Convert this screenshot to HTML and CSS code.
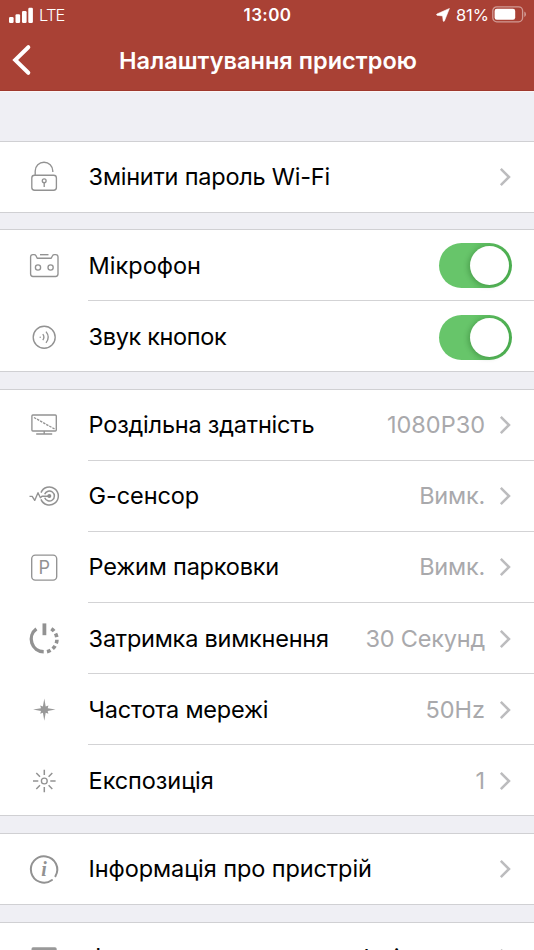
FILE: index.html
```html
<!DOCTYPE html>
<html lang="uk">
<head>
<meta charset="utf-8">
<title>Налаштування пристрою</title>
<link rel="stylesheet" href="styles.css">
</head>
<body>
<svg width="0" height="0" class="defs"><symbol id="chev" viewBox="0 0 12 20"><path d="M1.8 1.8 10 10 1.8 18.2" fill="none" stroke="#bcbcbe" stroke-width="2.5"/></symbol></svg>
<header class="top">
  <div class="status">
    <div class="carrier">
      <svg width="24" height="16" viewBox="0 0 24 16" fill="#fff"><rect x="0" y="10" width="4.6" height="6" rx="1.2"/><rect x="6.5" y="7.3" width="4.6" height="8.7" rx="1.2"/><rect x="13" y="4" width="4.6" height="12" rx="1.2"/><rect x="19.3" y="0.7" width="4.6" height="15.3" rx="1.2"/></svg>
      <span class="lte">LTE</span>
    </div>
    <div class="clock">13:00</div>
    <div class="power">
      <svg width="14" height="14" viewBox="0 0 14 14"><path d="M13.4.5 8.4 13Q7.7 14 7.2 13L6.6 7.9 1 7.3Q0 6.8.9 6Z" fill="#fff" stroke="#fff" stroke-width=".6"/></svg>
      <span class="percent">81%</span>
      <svg width="35" height="17" viewBox="0 0 35 17"><rect x=".8" y=".8" width="29.8" height="15" rx="4" fill="none" stroke="#d19a94" stroke-width="1.3"/><rect x="2.6" y="2.8" width="20.6" height="11" rx="2.2" fill="#fff"/><path d="M32.3 5.6Q34 6.3 34 8.3T32.3 11Z" fill="#d19a94"/></svg>
    </div>
  </div>
  <div class="nav">
    <svg class="back" width="20" height="32" viewBox="0 0 20 32"><path d="M16.3 3.2 3.2 16 16.3 28.8" fill="none" stroke="#fff" stroke-width="4" stroke-linecap="round"/></svg>
    <h1>Налаштування пристрою</h1>
  </div>
</header>
<main>
  <section class="group first">
    <div class="row">
      <svg class="icon" viewBox="0 0 40 40"><rect x="7.8" y="18.2" width="24.6" height="15" rx="2.8"/><path d="M11.2 18V14A8.8 8.8 0 0 1 28.8 14V15"/><circle cx="20.2" cy="23.8" r="1.9"/><path d="M20.2 25.7V29.9"/></svg>
      <span class="label l-wifi">Змінити пароль Wi-Fi</span>
      <svg class="chevron"><use href="#chev"/></svg>
    </div>
  </section>
  <section class="group second">
    <div class="row">
      <svg class="icon" viewBox="0 0 40 40"><path d="M13.2 12.2 12 9.7Q11.5 8.6 10 8.6H8.8Q6.6 8.6 6.6 10.8V28.1Q6.6 30.5 9 30.5H31.6Q34 30.5 34 28.1V10.8Q34 8.6 31.8 8.6H30.5Q29 8.6 28.5 9.7L27.2 12.2Z" stroke-linejoin="round"/><path d="M16 8.7H24.5"/><circle cx="14" cy="21.5" r="2.6"/><circle cx="26.6" cy="21.5" r="2.6"/></svg>
      <span class="label">Мікрофон</span>
      <span class="switch"><span class="knob"></span></span>
    </div>
    <div class="row">
      <svg class="icon" viewBox="0 0 40 40"><circle cx="20.2" cy="20.2" r="11"/><circle cx="16.2" cy="20.2" r=".7" fill="#8e8e8e" stroke="none"/><path d="M18.8 17.2Q21 20.2 18.8 23.2M22 14.6Q26.5 20.2 22 25.8"/></svg>
      <span class="label l-sound">Звук кнопок</span>
      <span class="switch"><span class="knob"></span></span>
    </div>
  </section>
  <section class="group">
    <div class="row raised">
      <svg class="icon" viewBox="0 0 40 40"><rect x="7.9" y="10" width="24.4" height="16" rx="1"/><path d="M20.2 26V28.8M12.2 29H28.2"/><path d="M10 12.5 30.6 24" stroke-dasharray="2.5 1"/></svg>
      <span class="label l-res">Роздільна здатність</span>
      <span class="value v-res">1080P30</span>
      <svg class="chevron"><use href="#chev"/></svg>
    </div>
    <div class="row raised">
      <svg class="icon" viewBox="0 0 40 40"><path d="M5.5 20.3H8.2L10.7 24.4 14 16.7 16.4 21.7 18 20.2H25" stroke-linejoin="round"/><circle cx="25.3" cy="20" r="2" fill="#8e8e8e" stroke="none"/><path d="M20.7 18.2A5 5 0 1 1 20.7 21.8M17 16.6A9 9 0 1 1 17 23.4" stroke-width="1.5"/></svg>
      <span class="label l-g">G-сенсор</span>
      <span class="value v-off">Вимк.</span>
      <svg class="chevron"><use href="#chev"/></svg>
    </div>
    <div class="row raised">
      <svg class="icon" viewBox="0 0 40 40"><rect x="7.7" y="8.1" width="25" height="25" rx="3.6"/><text x="14.6" y="27.2" class="p-mark">P</text></svg>
      <span class="label l-park">Режим парковки</span>
      <span class="value v-off">Вимк.</span>
      <svg class="chevron"><use href="#chev"/></svg>
    </div>
    <div class="row">
      <svg class="icon" viewBox="0 0 40 40"><path d="M20.4 4.4V16.2" stroke-width="3.8"/><path d="M12.4 9.9A12.7 12.7 0 0 0 19.7 32.8" stroke-width="3.4"/><path d="M27.3 9.7A12.7 12.7 0 0 1 21.4 32.9" stroke-width="3.6" stroke-dasharray="3.8 2.6"/></svg>
      <span class="label l-delay">Затримка вимкнення</span>
      <span class="value v-sec">30 Секунд</span>
      <svg class="chevron"><use href="#chev"/></svg>
    </div>
    <div class="row">
      <svg class="icon" viewBox="0 0 40 40"><path d="M20.3 8.5 21.7 16.4 24.4 15.4 23.7 18.3 31.5 19.6 23.7 20.9 24.4 23.8 21.7 22.8 20.3 30.7 18.9 22.8 16.2 23.8 17 20.9 9.1 19.6 17 18.3 16.2 15.4 18.9 16.4Z" fill="#999" stroke="none"/></svg>
      <span class="label l-freq">Частота мережі</span>
      <span class="value v-hz">50Hz</span>
      <svg class="chevron"><use href="#chev"/></svg>
    </div>
    <div class="row">
      <svg class="icon" viewBox="0 0 40 40"><circle cx="20.3" cy="20" r="2.9"/><path d="M20.3 8.7V14M20.3 26V31.3M9 20H14.3M26.3 20H31.6M12.3 12 16 15.7M28.3 12 24.6 15.7M12.3 28 16 24.3M28.3 28 24.6 24.3" stroke-width="1.5"/></svg>
      <span class="label l-exp">Експозиція</span>
      <span class="value v-one">1</span>
      <svg class="chevron"><use href="#chev"/></svg>
    </div>
  </section>
  <section class="group">
    <div class="row">
      <svg class="icon" viewBox="0 0 40 40"><path d="M31.4 27.2A13.2 13.2 0 1 0 28 31" stroke-width="2" stroke-linecap="round"/><text x="17.2" y="26.8" class="i-mark">i</text></svg>
      <span class="label l-info">Інформація про пристрій</span>
      <svg class="chevron"><use href="#chev"/></svg>
    </div>
  </section>
  <section class="group">
    <div class="row">
      <svg class="icon" viewBox="0 0 40 40"><path d="M9 9.2H31Q32.7 9.2 32.7 11V31H7.5V11Q7.5 9.2 9 9.2Z" fill="#999" stroke="none"/></svg>
      <span class="label l-format">Форматувати карту пам'яті</span>
      <svg class="chevron"><use href="#chev"/></svg>
    </div>
  </section>
</main>
</body>
</html>
```
FILE: styles.css
```css
* { box-sizing: border-box; }
html, body { height: 100%; overflow: hidden; }
body { margin: 0; background: #efeff4; color: #000; font-family: Inter, "Noto Sans", sans-serif; }
.defs { display: none; }
.top { height: 92px; background: #a94135; border-bottom: 1px solid #fbf6f6; box-shadow: inset 0 -1px #9f382d; color: #fff; }
.status { height: 30px; display: grid; grid-template-columns: 1fr auto 1fr; align-items: center; padding: 0 8px 0 9px; }
.carrier { display: flex; align-items: center; gap: 6px; height: 30px; }
.carrier svg { margin-top: -1px; }
.lte { font-size: 16.5px; font-weight: 300; letter-spacing: -0.8px; }
.clock { font-size: 17px; font-weight: 600; letter-spacing: 0.4px; }
.power { display: flex; justify-content: flex-end; align-items: center; margin-right: -1px; }
.percent { font-size: 16.5px; letter-spacing: 0; margin: 0 3px 0 6px; }
.power svg:last-child { margin-top: -2px; }
.nav { height: 61px; display: grid; grid-template-columns: 40px 1fr 40px; align-items: center; }
.back { margin-left: 12px; margin-top: -2px; }
h1 { margin: 0 -2px 0 0; text-align: center; font-size: 23.5px; line-height: 30px; font-weight: 600; letter-spacing: 0.03px; white-space: nowrap; }
.group { background: #fff; border-top: 1px solid #d0d0d3; border-bottom: 1px solid #d0d0d3; margin-bottom: 17px; }
.first { margin-top: 49px; margin-bottom: 16px; }
.row { height: 71px; display: flex; align-items: center; padding: 0 22px 0 24px; background: linear-gradient(#d3d3d5, #d3d3d5) 88px 100% / 100% 1px no-repeat; }
.row:last-child { height: 70px; background: none; }
.row:last-child:not(:first-child) { padding-top: 2px; }
.raised { padding-bottom: 2px; }
.icon { width: 40px; height: 40px; flex: none; fill: none; stroke: #929292; stroke-width: 1.35; margin-right: 24.6px; }
.label { font-size: 23.5px; line-height: 32px; white-space: nowrap; margin-right: auto; }
.l-wifi { letter-spacing: -0.23px; }
.l-sound { letter-spacing: -0.35px; }
.l-res, .l-park, .l-freq { letter-spacing: -0.21px; }
.l-delay { letter-spacing: -0.23px; }
.l-g, .l-exp, .l-info { letter-spacing: -0.09px; }
.l-format { letter-spacing: -0.2px; }
.value { font-size: 23.5px; line-height: 32px; white-space: nowrap; color: #a9a9ac; font-weight: 400; }
.v-sec, .v-off { letter-spacing: -0.2px; }
.chevron { width: 12px; height: 20px; flex: none; margin-left: 14px; margin-right: 1px; }
.switch { width: 73px; height: 45px; border-radius: 23px; background: linear-gradient(90deg, #67c56a 45%, #4caf50); padding: 3px; display: flex; justify-content: flex-end; }
.knob { width: 39px; height: 39px; border-radius: 50%; background: #fff; box-shadow: -2px 1px 5px rgba(0, 60, 0, .25); }
.p-mark { font: 400 18px Inter, sans-serif; fill: #929292; stroke: none; }
.i-mark { font: italic 700 20px "Liberation Serif", serif; fill: #929292; stroke: none; }
```
